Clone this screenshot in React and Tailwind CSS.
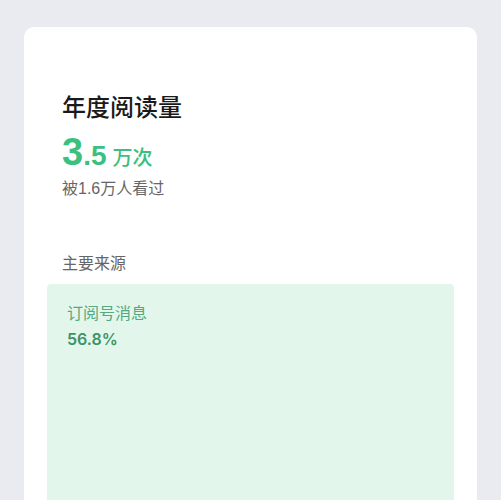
export default function App() {
  const font = { fontFamily: '"Liberation Sans", "Noto Sans CJK SC", sans-serif' };
  return (
    <div className="w-[501px] h-[500px] bg-[#e9ebf0] overflow-hidden pt-[27px] px-[24px]" style={font}>
      <div className="bg-white rounded-[10px] h-[520px] pt-[65px] px-[23px]">
        <div className="px-[15px]">
          <div className="text-[24px] leading-[32px] font-medium text-[#1a1a1a]">年度阅读量</div>
          <div className="flex items-baseline mt-[8px] text-[#3dbf80] leading-[40px]">
            <span className="text-[38px] font-bold">3</span>
            <span className="text-[28px] font-bold">.5</span>
            <span className="text-[20px] font-medium ml-[6px]">万次</span>
          </div>
          <div className="text-[16px] leading-[22px] text-[#666666] mt-[0px]">被1.6万人看过</div>
          <div className="text-[16px] leading-[22px] text-[#666666] mt-[53px]">主要来源</div>
        </div>
        <div className="mt-[9px] bg-[#e3f6ec] rounded-[4px] h-[240px] px-[20px] pt-[18px]">
          <div className="text-[16px] leading-[24px] text-[#55a980]">订阅号消息</div>
          <div className="text-[16px] leading-[20px] mt-[3px] font-semibold text-[#3a9468] font-['Inter',sans-serif]">56.8%</div>
        </div>
      </div>
    </div>
  );
}
